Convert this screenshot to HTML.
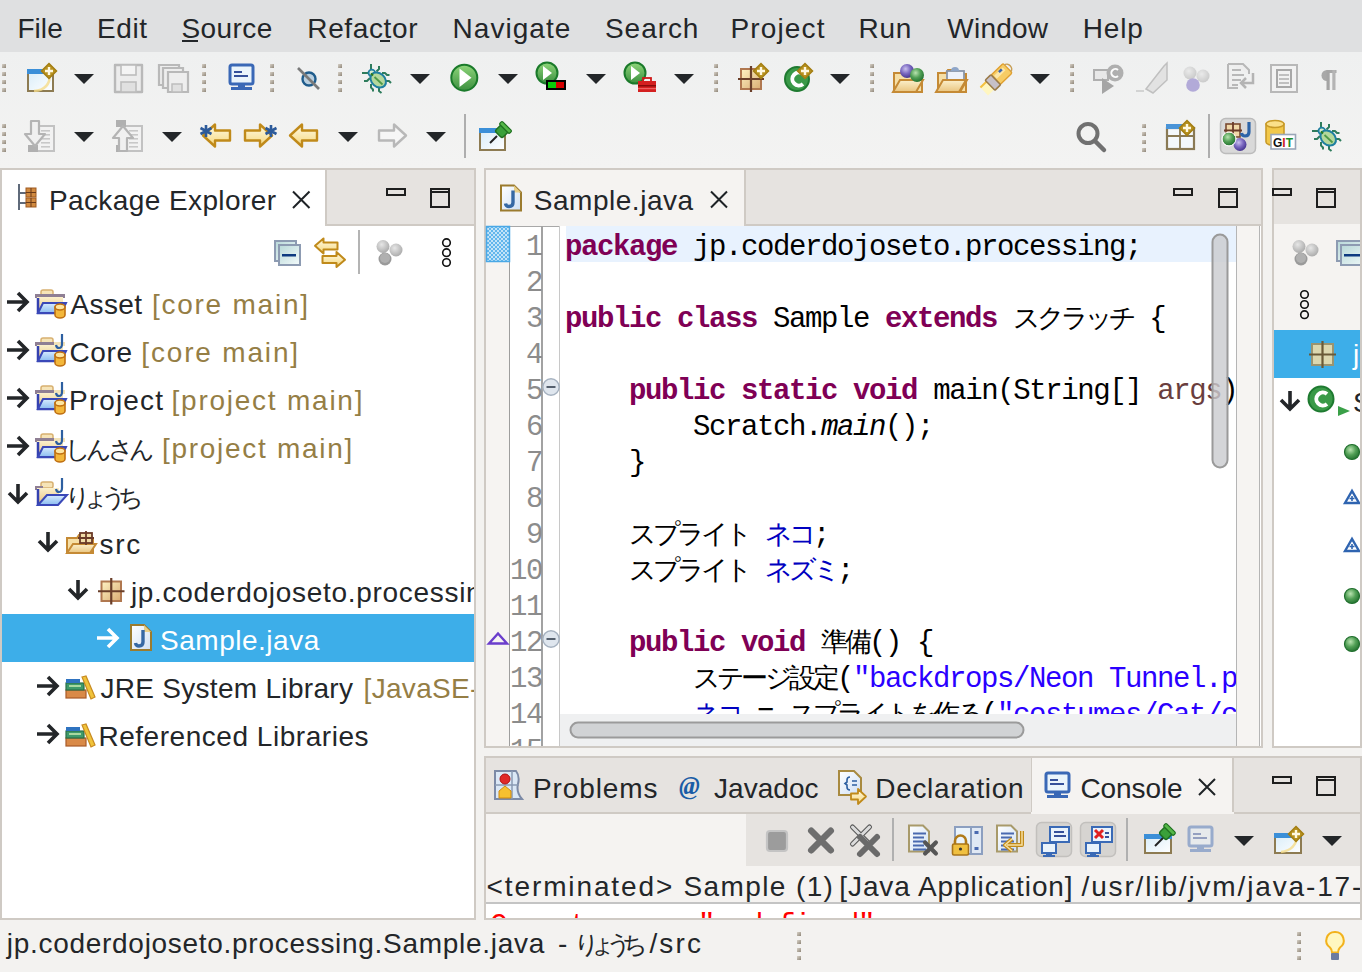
<!DOCTYPE html>
<html><head><meta charset="utf-8"><style>
html,body{margin:0;padding:0;}
body{width:1362px;height:972px;overflow:hidden;position:relative;background:#f3f2f0;font-family:"Liberation Sans",sans-serif;}
.b{position:absolute;}
.t{position:absolute;line-height:80px;height:80px;white-space:pre;font-family:"Liberation Sans",sans-serif;}
.i{position:absolute;}
.code{position:absolute;left:565px;top:230px;width:671px;height:484px;overflow:hidden;font-family:"Liberation Mono",monospace;font-size:29px;letter-spacing:-1.4px;line-height:36px;white-space:pre;color:#000;}
.lnum{position:absolute;left:486px;top:230px;width:56px;height:516px;overflow:hidden;font-family:"Liberation Mono",monospace;font-size:29px;letter-spacing:-1.4px;line-height:36px;white-space:pre;color:#8c8c8c;}
.lnum div{padding-right:0}
.k{color:#7f0055;font-weight:bold}
.j{font-size:26.5px;letter-spacing:0}
.c{display:inline-block;width:24px;overflow:visible}
.f{color:#0000c0}
.s{color:#2a00ff}
</style></head><body>
<div class="b" style="left:0px;top:0px;width:1362px;height:52px;background:#dfe0e1"></div><div class="b" style="left:0px;top:52px;width:1362px;height:116px;background:linear-gradient(#eff0f0,#f3f3f2)"></div><div class="b" style="left:0px;top:168px;width:476px;height:752px;background:#fff;border:2px solid #cfcac4;box-sizing:border-box"></div><div class="b" style="left:2px;top:170px;width:472px;height:54px;background:#e6e3e0"></div><div class="b" style="left:2px;top:170px;width:323px;height:56px;background:#fff"></div><div class="b" style="left:325px;top:170px;width:2px;height:54px;background:#cfcac4"></div><div class="b" style="left:325px;top:224px;width:149px;height:2px;background:#cfcac4"></div><div class="b" style="left:2px;top:614px;width:472px;height:48px;background:#3daee9"></div><div class="b" style="left:484px;top:168px;width:779px;height:580px;background:#fff;border:2px solid #cfcac4;box-sizing:border-box"></div><div class="b" style="left:486px;top:170px;width:775px;height:54px;background:#e6e3e0"></div><div class="b" style="left:486px;top:170px;width:258px;height:56px;background:#f5f3f1"></div><div class="b" style="left:744px;top:170px;width:2px;height:54px;background:#cfcac4"></div><div class="b" style="left:744px;top:224px;width:517px;height:2px;background:#cfcac4"></div><div class="b" style="left:486px;top:226px;width:23px;height:520px;background:#f6f4f2"></div><div class="b" style="left:509px;top:226px;width:1px;height:520px;background:#9e9e9e"></div><div class="b" style="left:510px;top:226px;width:50px;height:1px;background:#a8a8a8"></div><div class="b" style="left:541px;top:226px;width:2px;height:520px;background:#a2a2a2"></div><div class="b" style="left:559px;top:226px;width:1px;height:520px;background:#c8c8c8"></div><div class="b" style="left:566px;top:226px;width:670px;height:36px;background:#e8f2fe"></div><div class="b" style="left:1236px;top:226px;width:24px;height:520px;background:#f6f4f2;border-left:1px solid #b5b5b5;border-right:1px solid #b5b5b5;box-sizing:border-box"></div><div class="b" style="left:1272px;top:168px;width:90px;height:580px;background:#fff;border:2px solid #cfcac4;box-sizing:border-box"></div><div class="b" style="left:1274px;top:170px;width:86px;height:54px;background:#e6e3e0"></div><div class="b" style="left:1274px;top:224px;width:86px;height:106px;background:#f5f3f1"></div><div class="b" style="left:1274px;top:330px;width:86px;height:48px;background:#3daee9"></div><div class="b" style="left:484px;top:756px;width:878px;height:164px;background:#f5f3f1;border:2px solid #cfcac4;box-sizing:border-box"></div><div class="b" style="left:486px;top:758px;width:874px;height:54px;background:#e6e3e0"></div><div class="b" style="left:1031px;top:758px;width:201px;height:56px;background:#f5f3f1"></div><div class="b" style="left:1031px;top:758px;width:1px;height:54px;background:#cfcac4"></div><div class="b" style="left:1232px;top:758px;width:2px;height:54px;background:#cfcac4"></div><div class="b" style="left:486px;top:812px;width:545px;height:2px;background:#cfcac4"></div><div class="b" style="left:1234px;top:812px;width:126px;height:2px;background:#cfcac4"></div><div class="b" style="left:746px;top:814px;width:614px;height:52px;background:#e6e3e0"></div><div class="b" style="left:486px;top:902px;width:874px;height:2px;background:#c4c4c4"></div><div class="b" style="left:486px;top:904px;width:874px;height:14px;background:#fff"></div><div class="b" style="left:0px;top:920px;width:1362px;height:52px;background:#f3f2f0"></div>
<div class="code">
<div class="cl" style="position:absolute;left:0;top:0px;height:36px"><span class="k">package</span> jp.coderdojoseto.processing;</div>
<div class="cl" style="position:absolute;left:0;top:36px;height:36px"></div>
<div class="cl" style="position:absolute;left:0;top:72px;height:36px"><span class="k">public</span> <span class="k">class</span> Sample <span class="k">extends</span> <span class="j"><span class="c">ス</span><span class="c">ク</span><span class="c">ラ</span><span class="c">ッ</span><span class="c">チ</span></span> {</div>
<div class="cl" style="position:absolute;left:0;top:108px;height:36px"></div>
<div class="cl" style="position:absolute;left:0;top:144px;height:36px">    <span class="k">public</span> <span class="k">static</span> <span class="k">void</span> main(String[] <span style="color:#6a3e3e">args</span>) {</div>
<div class="cl" style="position:absolute;left:0;top:180px;height:36px">        Scratch.<i>main</i>();</div>
<div class="cl" style="position:absolute;left:0;top:216px;height:36px">    }</div>
<div class="cl" style="position:absolute;left:0;top:252px;height:36px"></div>
<div class="cl" style="position:absolute;left:0;top:288px;height:36px">    <span class="j"><span class="c">ス</span><span class="c">プ</span><span class="c">ラ</span><span class="c">イ</span><span class="c">ト</span></span> <span class="f j"><span class="c">ネ</span><span class="c">コ</span></span>;</div>
<div class="cl" style="position:absolute;left:0;top:324px;height:36px">    <span class="j"><span class="c">ス</span><span class="c">プ</span><span class="c">ラ</span><span class="c">イ</span><span class="c">ト</span></span> <span class="f j"><span class="c">ネ</span><span class="c">ズ</span><span class="c">ミ</span></span>;</div>
<div class="cl" style="position:absolute;left:0;top:360px;height:36px"></div>
<div class="cl" style="position:absolute;left:0;top:396px;height:36px">    <span class="k">public</span> <span class="k">void</span> <span class="j"><span class="c">準</span><span class="c">備</span></span>() {</div>
<div class="cl" style="position:absolute;left:0;top:432px;height:36px">        <span class="j"><span class="c">ス</span><span class="c">テ</span><span class="c">ー</span><span class="c">ジ</span><span class="c">設</span><span class="c">定</span></span>(<span class="s">"backdrops/Neon Tunnel.png"</span>);</div>
<div class="cl" style="position:absolute;left:0;top:468px;height:36px">        <span class="f j"><span class="c">ネ</span><span class="c">コ</span></span> = <span class="j"><span class="c">ス</span><span class="c">プ</span><span class="c">ラ</span><span class="c">イ</span><span class="c">ト</span><span class="c">を</span><span class="c">作</span><span class="c">る</span></span>(<span class="s">"costumes/Cat/cat-a.svg"</span>);</div>
<div class="cl" style="position:absolute;left:0;top:504px;height:36px">        <span class="f j"><span class="c">ネ</span><span class="c">ズ</span><span class="c">ミ</span></span> = <span class="j"><span class="c">ス</span><span class="c">プ</span><span class="c">ラ</span><span class="c">イ</span><span class="c">ト</span><span class="c">を</span><span class="c">作</span><span class="c">る</span></span>("costumes/Mouse/mouse.svg");</div>
</div>
<div class="lnum">
<div style="position:absolute;right:0;top:0px;height:36px">1</div>
<div style="position:absolute;right:0;top:36px;height:36px">2</div>
<div style="position:absolute;right:0;top:72px;height:36px">3</div>
<div style="position:absolute;right:0;top:108px;height:36px">4</div>
<div style="position:absolute;right:0;top:144px;height:36px">5</div>
<div style="position:absolute;right:0;top:180px;height:36px">6</div>
<div style="position:absolute;right:0;top:216px;height:36px">7</div>
<div style="position:absolute;right:0;top:252px;height:36px">8</div>
<div style="position:absolute;right:0;top:288px;height:36px">9</div>
<div style="position:absolute;right:0;top:324px;height:36px">10</div>
<div style="position:absolute;right:0;top:360px;height:36px">11</div>
<div style="position:absolute;right:0;top:396px;height:36px">12</div>
<div style="position:absolute;right:0;top:432px;height:36px">13</div>
<div style="position:absolute;right:0;top:468px;height:36px">14</div>
<div style="position:absolute;right:0;top:504px;height:36px">15</div>
</div>
<div class="t" style="left:17.4px;top:-11px;font-size:28px;letter-spacing:0.067px;color:#232629">File</div>
<div class="t" style="left:97.1px;top:-11px;font-size:28px;letter-spacing:0.567px;color:#232629">Edit</div>
<div class="t" style="left:181.4px;top:-11px;font-size:28px;letter-spacing:0.42px;color:#232629">Source</div>
<div class="t" style="left:307.3px;top:-11px;font-size:28px;letter-spacing:0.629px;color:#232629">Refactor</div>
<div class="t" style="left:452.5px;top:-11px;font-size:28px;letter-spacing:1.043px;color:#232629">Navigate</div>
<div class="t" style="left:605.0px;top:-11px;font-size:28px;letter-spacing:0.94px;color:#232629">Search</div>
<div class="t" style="left:730.5px;top:-11px;font-size:28px;letter-spacing:1.133px;color:#232629">Project</div>
<div class="t" style="left:858.5px;top:-11px;font-size:28px;letter-spacing:0.75px;color:#232629">Run</div>
<div class="t" style="left:947.3px;top:-11px;font-size:28px;letter-spacing:0.24px;color:#232629">Window</div>
<div class="t" style="left:1082.7px;top:-11px;font-size:28px;letter-spacing:0.833px;color:#232629">Help</div>
<div class="t" style="left:48.9px;top:161px;font-size:28px;letter-spacing:0.407px;color:#232629">Package Explorer</div>
<div class="t" style="left:533.7px;top:161px;font-size:28px;letter-spacing:0.54px;color:#232629">Sample.java</div>
<div class="t" style="left:533.0px;top:749px;font-size:28px;letter-spacing:0.886px;color:#232629">Problems</div>
<div class="t" style="left:714.0px;top:749px;font-size:28px;letter-spacing:0.033px;color:#232629">Javadoc</div>
<div class="t" style="left:875.3px;top:749px;font-size:28px;letter-spacing:0.66px;color:#232629">Declaration</div>
<div class="t" style="left:1080.5px;top:749px;font-size:28px;letter-spacing:-0.1px;color:#232629">Console</div>
<div class="t" style="left:486.6px;top:847px;font-size:28px;letter-spacing:1.882px;color:#232629">&lt;terminated&gt;</div>
<div class="t" style="left:683.4px;top:847px;font-size:28px;letter-spacing:1.4px;color:#232629">Sample (1)</div>
<div class="t" style="left:839.3px;top:847px;font-size:28px;letter-spacing:0.906px;color:#232629">[Java Application]</div>
<div class="t" style="left:1081.5px;top:847px;font-size:28px;letter-spacing:1.855px;color:#232629">/usr/lib/jvm/java-17-</div>
<div class="t" style="left:6.8px;top:904px;font-size:28px;letter-spacing:0.708px;color:#232629">jp.coderdojoseto.processing.Sample.java</div>
<div class="t" style="left:558.0px;top:904px;font-size:28px;letter-spacing:0.5px;color:#232629">-</div>
<div class="t" style="left:573.6px;top:904px;font-size:25px;letter-spacing:-9.967px;color:#232629">りょうち</div>
<div class="t" style="left:649.4px;top:904px;font-size:28px;letter-spacing:2.2px;color:#232629">/src</div>
<div style="position:absolute;left:2px;top:226px;width:472px;height:692px;overflow:hidden"><div style="position:absolute;left:-2px;top:-226px"><div class="t" style="left:70.5px;top:265px;font-size:28px;letter-spacing:0.375px;color:#232629">Asset</div>
<div class="t" style="left:151.9px;top:265px;font-size:28px;letter-spacing:1.76px;color:#957e45">[core main]</div>
<div class="t" style="left:69.5px;top:313px;font-size:28px;letter-spacing:0.633px;color:#232629">Core</div>
<div class="t" style="left:141.3px;top:313px;font-size:28px;letter-spacing:1.83px;color:#957e45">[core main]</div>
<div class="t" style="left:69.1px;top:361px;font-size:28px;letter-spacing:1.117px;color:#232629">Project</div>
<div class="t" style="left:171.5px;top:361px;font-size:28px;letter-spacing:1.762px;color:#957e45">[project main]</div>
<div class="t" style="left:65.3px;top:409px;font-size:25px;letter-spacing:-4.867px;color:#232629">しんさん</div>
<div class="t" style="left:162.0px;top:409px;font-size:28px;letter-spacing:1.715px;color:#957e45">[project main]</div>
<div class="t" style="left:64.8px;top:457px;font-size:25px;letter-spacing:-8.1px;color:#232629">りょうち</div>
<div class="t" style="left:99.4px;top:505px;font-size:28px;letter-spacing:1.8px;color:#232629">src</div>
<div class="t" style="left:130.9px;top:553px;font-size:28px;letter-spacing:0.708px;color:#232629">jp.coderdojoseto.processing</div>
<div class="t" style="left:160.0px;top:601px;font-size:28px;letter-spacing:0.52px;color:#ffffff">Sample.java</div>
<div class="t" style="left:100.4px;top:649px;font-size:28px;letter-spacing:0.3px;color:#232629">JRE System Library</div>
<div class="t" style="left:363.6px;top:649px;font-size:28px;letter-spacing:0.3px;color:#957e45">[JavaSE-17]</div>
<div class="t" style="left:98.4px;top:697px;font-size:28px;letter-spacing:0.537px;color:#232629">Referenced Libraries</div></div></div>
<svg class="i" style="left:0;top:0" width="1362" height="972" viewBox="0 0 1362 972"><defs>
<linearGradient id="gGrip" x1="0" y1="0" x2="1" y2="1"><stop offset="0" stop-color="#d8d2c8"/><stop offset="1" stop-color="#8f8678"/></linearGradient>
<linearGradient id="gGreen" x1="0" y1="0" x2="0" y2="1"><stop offset="0" stop-color="#8fd67a"/><stop offset="1" stop-color="#3b8f3f"/></linearGradient>
<radialGradient id="gSphG" cx="0.4" cy="0.35" r="0.7"><stop offset="0" stop-color="#b9e3b0"/><stop offset="0.5" stop-color="#52a056"/><stop offset="1" stop-color="#1f6e2c"/></radialGradient>
<radialGradient id="gSphP" cx="0.4" cy="0.35" r="0.7"><stop offset="0" stop-color="#c9c0ee"/><stop offset="0.5" stop-color="#7a68c0"/><stop offset="1" stop-color="#3f2f8a"/></radialGradient>
<radialGradient id="gSphGrey" cx="0.4" cy="0.35" r="0.7"><stop offset="0" stop-color="#e6e6e6"/><stop offset="1" stop-color="#a8a8a8"/></radialGradient>
<linearGradient id="gTan" x1="0" y1="0" x2="0" y2="1"><stop offset="0" stop-color="#fbf0cc"/><stop offset="1" stop-color="#e9c47e"/></linearGradient>
<linearGradient id="gPkg" x1="0" y1="0" x2="1" y2="1"><stop offset="0" stop-color="#fff3c4"/><stop offset="1" stop-color="#d9ac72"/></linearGradient>
<linearGradient id="gBlueF" x1="0" y1="0" x2="0" y2="1"><stop offset="0" stop-color="#d8ecff"/><stop offset="1" stop-color="#8bbcf0"/></linearGradient>
<linearGradient id="gWin" x1="0" y1="0" x2="1" y2="1"><stop offset="0" stop-color="#d8ecf8"/><stop offset="1" stop-color="#ffffff"/></linearGradient>
<linearGradient id="gDoc" x1="0" y1="0" x2="1" y2="1"><stop offset="0" stop-color="#ffffff"/><stop offset="1" stop-color="#cfe0f4"/></linearGradient>
<linearGradient id="gArrow" x1="0" y1="0" x2="0" y2="1"><stop offset="0" stop-color="#fffbe8"/><stop offset="1" stop-color="#f6d77a"/></linearGradient>
<linearGradient id="gCol" x1="0" y1="0" x2="1" y2="1"><stop offset="0" stop-color="#b8d8d8"/><stop offset="1" stop-color="#f4fbfb"/></linearGradient>
<pattern id="pDot" x="487" y="226" width="4" height="4" patternUnits="userSpaceOnUse"><rect width="4" height="4" fill="#c4e4f8"/><rect width="2" height="2" fill="#62b6ec"/><rect x="2" y="2" width="2" height="2" fill="#62b6ec"/></pattern>
<clipPath id="cpCon"><rect x="486" y="904" width="876" height="14"/></clipPath></defs><rect x="182" y="40" width="16" height="2" fill="#232629"/><rect x="380" y="40" width="10" height="2" fill="#232629"/><rect x="2" y="64" width="4" height="4" fill="url(#gGrip)"/><rect x="2" y="72" width="4" height="4" fill="url(#gGrip)"/><rect x="2" y="80" width="4" height="4" fill="url(#gGrip)"/><rect x="2" y="88" width="4" height="4" fill="url(#gGrip)"/><rect x="202" y="64" width="4" height="4" fill="url(#gGrip)"/><rect x="202" y="72" width="4" height="4" fill="url(#gGrip)"/><rect x="202" y="80" width="4" height="4" fill="url(#gGrip)"/><rect x="202" y="88" width="4" height="4" fill="url(#gGrip)"/><rect x="270" y="64" width="4" height="4" fill="url(#gGrip)"/><rect x="270" y="72" width="4" height="4" fill="url(#gGrip)"/><rect x="270" y="80" width="4" height="4" fill="url(#gGrip)"/><rect x="270" y="88" width="4" height="4" fill="url(#gGrip)"/><rect x="338" y="64" width="4" height="4" fill="url(#gGrip)"/><rect x="338" y="72" width="4" height="4" fill="url(#gGrip)"/><rect x="338" y="80" width="4" height="4" fill="url(#gGrip)"/><rect x="338" y="88" width="4" height="4" fill="url(#gGrip)"/><rect x="714" y="64" width="4" height="4" fill="url(#gGrip)"/><rect x="714" y="72" width="4" height="4" fill="url(#gGrip)"/><rect x="714" y="80" width="4" height="4" fill="url(#gGrip)"/><rect x="714" y="88" width="4" height="4" fill="url(#gGrip)"/><rect x="870" y="64" width="4" height="4" fill="url(#gGrip)"/><rect x="870" y="72" width="4" height="4" fill="url(#gGrip)"/><rect x="870" y="80" width="4" height="4" fill="url(#gGrip)"/><rect x="870" y="88" width="4" height="4" fill="url(#gGrip)"/><rect x="1070" y="64" width="4" height="4" fill="url(#gGrip)"/><rect x="1070" y="72" width="4" height="4" fill="url(#gGrip)"/><rect x="1070" y="80" width="4" height="4" fill="url(#gGrip)"/><rect x="1070" y="88" width="4" height="4" fill="url(#gGrip)"/><rect x="28" y="70" width="25" height="21" fill="url(#gWin)" stroke="#8d7b52" stroke-width="2"/><rect x="27" y="69" width="27" height="5" fill="#3b8fd8"/><path d="M34 91Q50 90 50 74" fill="none" stroke="#f5dc8a" stroke-width="2.5" opacity="0.8"/><path d="M49 63.5L56.5 71L49 78.5L41.5 71z" fill="#b8921f" stroke="#a47e12" stroke-width="1.5"/><path d="M45 71h8M49 67v8" stroke="#b08a1e" stroke-width="0" /><path d="M45 71h8M49 67v8" stroke="#fff8e0" stroke-width="2.4"/><path d="M74 74h20l-10.0 10z" fill="#232629"/><path d="M115 65h27v27h-27z" fill="#ececec" stroke="#b9b9b9" stroke-width="2.4" stroke-linejoin="round"/><rect x="121" y="65" width="15" height="10" fill="#f4f4f4" stroke="#bdbdbd" stroke-width="1.6"/><rect x="121" y="82" width="15" height="10" fill="#e0e0e0" stroke="#bdbdbd" stroke-width="1.6"/><path d="M159 65h20v20h-20z" fill="#eeeeee" stroke="#b9b9b9" stroke-width="2.2"/><path d="M163 68h20v20h-20z" fill="#eeeeee" stroke="#b9b9b9" stroke-width="2.2"/><path d="M168 72h20v20h-20z" fill="#eeeeee" stroke="#b9b9b9" stroke-width="2.2"/><rect x="172" y="84" width="10" height="8" fill="#e0e0e0" stroke="#bdbdbd" stroke-width="1.5"/><g opacity="1.0"><rect x="230" y="65" width="23" height="19" rx="2" fill="#eaf4fb" stroke="#3a68b6" stroke-width="3"/><rect x="234" y="71" width="8" height="2" fill="#35509a"/><rect x="234" y="75" width="14" height="2" fill="#35509a"/><rect x="238" y="84" width="7" height="3" fill="#3a68b6"/><rect x="231" y="87" width="21" height="3" fill="#3a68b6"/></g><circle cx="309" cy="79" r="6.5" fill="#b9cfdf" stroke="#1f5c8c" stroke-width="2.4"/><path d="M298 68L319 89" stroke="#7a7a7a" stroke-width="2.6"/><g transform="translate(0 0)"><g stroke="#2e7c5c" stroke-width="2" fill="none" stroke-linejoin="round"><path d="M371 64V70M379 66V69L376.5 71.5M362 73H368.5M364 81H367L370 78M371 84V87.5L373 89.5V91.5M379 88V91L381.5 93M382 73H385L387 75H389.5M386 81H389L391 83"/></g><circle cx="371.8" cy="73" r="3.3" fill="#d8ecd0" stroke="#1f7fa0" stroke-width="1.8"/><ellipse cx="378.2" cy="80" rx="8.6" ry="6.6" transform="rotate(42 378.2 80)" fill="#b4d89c" stroke="#1f7fa0" stroke-width="2"/><path d="M374.5 77L382.5 84.5" stroke="#4f9a48" stroke-width="1.8"/><path d="M371 73.5l2 2" stroke="#2a7a20" stroke-width="2"/></g><path d="M410 74h20l-10.0 10z" fill="#232629"/><circle cx="464.3" cy="77.7" r="13" fill="url(#gGreen)" stroke="#1a7a2a" stroke-width="2"/><path d="M459.5 68.5L471.5 77.7L459.5 87z" fill="#ffffff"/><path d="M498 74h20l-10.0 10z" fill="#232629"/><circle cx="547" cy="73" r="10.5" fill="url(#gGreen)" stroke="#1a7a2a" stroke-width="2"/><path d="M543 66L552 73L543 80z" fill="#ffffff"/><rect x="546" y="80" width="20" height="10" fill="#000"/><rect x="548" y="82" width="8" height="6" fill="#0acc0a"/><rect x="556" y="82" width="8" height="6" fill="#d40000"/><path d="M586 74h20l-10.0 10z" fill="#232629"/><circle cx="635" cy="73" r="10.5" fill="url(#gGreen)" stroke="#1a7a2a" stroke-width="2"/><path d="M631 66L640 73L631 80z" fill="#ffffff"/><rect x="643" y="78" width="8" height="4" fill="none" stroke="#d01818" stroke-width="1.8"/><rect x="638" y="81" width="18" height="11" fill="#d42020"/><rect x="638" y="85" width="18" height="1.5" fill="#8a0a0a"/><rect x="638" y="88" width="18" height="1.2" fill="#f06060"/><path d="M674 74h20l-10.0 10z" fill="#232629"/><rect x="741" y="69" width="20" height="20" fill="url(#gPkg)" stroke="#b07850" stroke-width="2"/><path d="M751.0 66V92M738 79.0H764" stroke="#6a3f2a" stroke-width="2.2"/><path d="M761 63.5L768.5 71L761 78.5L753.5 71z" fill="#b8921f" stroke="#a47e12" stroke-width="1.5"/><path d="M757 71h8M761 67v8" stroke="#b08a1e" stroke-width="0" /><path d="M757 71h8M761 67v8" stroke="#fff8e0" stroke-width="2.4"/><circle cx="797" cy="79" r="12" fill="#3a9a48" stroke="#1e7a30" stroke-width="2"/><path d="M803 74A6.5 6.5 0 1 0 803 84" fill="none" stroke="#ffffff" stroke-width="4"/><path d="M805 63.5L812.5 71L805 78.5L797.5 71z" fill="#b8921f" stroke="#a47e12" stroke-width="1.5"/><path d="M801 71h8M805 67v8" stroke="#b08a1e" stroke-width="0" /><path d="M801 71h8M805 67v8" stroke="#fff8e0" stroke-width="2.4"/><path d="M830 74h20l-10.0 10z" fill="#232629"/><path d="M894 73h8l2 -3h8v4h10v18h-28z" fill="#f6dfa6" stroke="#c58a35" stroke-width="2"/><path d="M893 92L900 80H923L916 92z" fill="url(#gTan)" stroke="#c58a35" stroke-width="2"/><circle cx="907" cy="71" r="7" fill="url(#gSphP)"/><circle cx="917" cy="75" r="7" fill="url(#gSphG)"/><path d="M938 73h8l2 -3h8v4h10v18h-28z" fill="#f6dfa6" stroke="#c58a35" stroke-width="2"/><path d="M937 92L944 80H967L960 92z" fill="url(#gTan)" stroke="#c58a35" stroke-width="2"/><rect x="947" y="71" width="17" height="11" fill="#eef2fa" stroke="#8a96a8" stroke-width="1.8"/><path d="M951 71a4 4 0 0 1 8 0" fill="#8fa6c8"/><path d="M936 92L943 80H966L959 92z" fill="url(#gTan)" stroke="#c58a35" stroke-width="2"/><g transform="rotate(-44 996.5 79)"><path d="M979 73H988V85H979z" fill="#fff6c0"/><path d="M979 73H988V75H979z" fill="#f4c040"/><rect x="995" y="72.5" width="17" height="13" rx="1.5" fill="#f6cc66" stroke="#e0a030" stroke-width="1.4"/><rect x="997" y="75" width="12" height="4" fill="#fce6a8"/><rect x="987.5" y="72" width="8" height="14" rx="1" fill="#c6c0c8" stroke="#9a7a48" stroke-width="1.6"/><path d="M1012 74.5a3.5 4.5 0 0 1 0 9" fill="none" stroke="#c8a058" stroke-width="1.6"/><rect x="1003" y="74.5" width="4" height="2.5" fill="#3a64b0"/></g><path d="M1030 74h20l-10.0 10z" fill="#232629"/><g opacity="0.75"><rect x="1094" y="70" width="14" height="10" fill="#e6e6e6" stroke="#9a9a9a" stroke-width="2"/><circle cx="1115" cy="73" r="8.5" fill="#9a9a9a"/><path d="M1118 70A4 4 0 1 0 1118 76" fill="none" stroke="#fff" stroke-width="2"/><path d="M1102 78L1114 86L1102 94z" fill="#8c8c8c"/></g><path d="M1136 91h8" stroke="#c8c8c8" stroke-width="1.5"/><path d="M1146 89L1164 66L1167 63V80L1153 93z" fill="#e2e2e2" stroke="#c0c0c0" stroke-width="1.5"/><g opacity="0.55"><circle cx="1190" cy="73" r="6.5" fill="url(#gSphGrey)"/><circle cx="1203" cy="76" r="6.5" fill="url(#gSphGrey)"/></g><circle cx="1193" cy="85" r="6.8" fill="#b2aad8"/><path d="M1228 64h15l6 6v4M1228 64v24h10" fill="#eeeeee" stroke="#b8b8b8" stroke-width="2"/><path d="M1232 70h9M1232 75h12M1232 80h9M1232 85h6" stroke="#b8b8b8" stroke-width="1.8"/><path d="M1253 73v10h-11M1246 78l-5 5l5 5" fill="none" stroke="#b4b4b4" stroke-width="2.5"/><rect x="1271" y="65" width="26" height="27" fill="#f2f2f2" stroke="#b8b8b8" stroke-width="2"/><rect x="1277" y="70" width="14" height="17" fill="none" stroke="#a8a8a8" stroke-width="2"/><path d="M1279 75h10M1279 79h10M1279 83h10" stroke="#b0b0b0" stroke-width="1.6"/><path d="M1327 70H1336.5V73H1327z" fill="#a8a8a8"/><path d="M1327 70A5.5 5.5 0 0 0 1327 81z" fill="#a8a8a8"/><rect x="1326.5" y="70" width="3.2" height="20" fill="#a4a4a4"/><rect x="1332.3" y="70" width="3.2" height="20" fill="#b4b4b4"/><rect x="2" y="124" width="4" height="4" fill="url(#gGrip)"/><rect x="2" y="132" width="4" height="4" fill="url(#gGrip)"/><rect x="2" y="140" width="4" height="4" fill="url(#gGrip)"/><rect x="2" y="148" width="4" height="4" fill="url(#gGrip)"/><rect x="1142" y="124" width="4" height="4" fill="url(#gGrip)"/><rect x="1142" y="132" width="4" height="4" fill="url(#gGrip)"/><rect x="1142" y="140" width="4" height="4" fill="url(#gGrip)"/><rect x="1142" y="148" width="4" height="4" fill="url(#gGrip)"/><rect x="36" y="126" width="18" height="25" fill="#f2f2f2" stroke="#c2c2c2" stroke-width="2"/><rect x="41" y="130" width="9" height="1.6" fill="#c8c8c8"/><rect x="41" y="134" width="9" height="1.6" fill="#c8c8c8"/><rect x="41" y="138" width="9" height="1.6" fill="#c8c8c8"/><rect x="41" y="142" width="9" height="1.6" fill="#c8c8c8"/><rect x="41" y="146" width="9" height="1.6" fill="#c8c8c8"/><rect x="28" y="145" width="10" height="7" fill="#b0b0b0"/><path d="M31 121h8v13h6l-10 12l-10 -12h6z" fill="#f0f0f0" stroke="#b4b4b4" stroke-width="2.2" stroke-linejoin="round"/><path d="M74 132h20l-10.0 10z" fill="#232629"/><rect x="124" y="126" width="18" height="25" fill="#f2f2f2" stroke="#c2c2c2" stroke-width="2"/><rect x="129" y="130" width="9" height="1.6" fill="#c8c8c8"/><rect x="129" y="134" width="9" height="1.6" fill="#c8c8c8"/><rect x="129" y="138" width="9" height="1.6" fill="#c8c8c8"/><rect x="129" y="142" width="9" height="1.6" fill="#c8c8c8"/><rect x="129" y="146" width="9" height="1.6" fill="#c8c8c8"/><rect x="116" y="145" width="10" height="7" fill="#b0b0b0"/><rect x="116" y="120" width="10" height="7" fill="#b0b0b0"/><path d="M119 151h8v-13h6l-10 -12l-10 12h6z" fill="#f0f0f0" stroke="#b4b4b4" stroke-width="2.2" stroke-linejoin="round"/><path d="M162 132h20l-10.0 10z" fill="#232629"/><path d="M203 135.5L215 124.5V130.5H230V140.5H215V146.5z" fill="url(#gArrow)" stroke="#c08a1a" stroke-width="2.4" stroke-linejoin="round"/><path d="M206 125V137M200.5 128L211.5 134M200.5 134L211.5 128" stroke="#2c5a9a" stroke-width="2.6"/><path d="M272 135.5L260 124.5V130.5H245V140.5H260V146.5z" fill="url(#gArrow)" stroke="#c08a1a" stroke-width="2.4" stroke-linejoin="round"/><path d="M271 125V137M265.5 128L276.5 134M265.5 134L276.5 128" stroke="#2c5a9a" stroke-width="2.6"/><path d="M290 135.5L302 124.5V130.5H317V140.5H302V146.5z" fill="url(#gArrow)" stroke="#c08a1a" stroke-width="2.4" stroke-linejoin="round"/><path d="M338 132h20l-10.0 10z" fill="#232629"/><path d="M406 135.5L394 124.5V130.5H379V140.5H394V146.5z" fill="#f6f6f6" stroke="#b8b8b8" stroke-width="2.4" stroke-linejoin="round"/><path d="M426 132h20l-10.0 10z" fill="#232629"/><rect x="464" y="114" width="2" height="44" fill="#aeaeae"/><rect x="480" y="129" width="25" height="21" fill="url(#gWin)" stroke="#8d7b52" stroke-width="2"/><rect x="479" y="128" width="27" height="5" fill="#3b8fd8"/><path d="M490 143L497 136" stroke="#222" stroke-width="2"/><g transform="rotate(45 502 131)"><rect x="497" y="126" width="10" height="10" rx="2" fill="#3aa03a" stroke="#1f7020" stroke-width="1.5"/><rect x="495" y="124" width="14" height="4" rx="1.5" fill="#55b848" stroke="#1f7020" stroke-width="1.2"/></g><circle cx="1088" cy="133.5" r="9.5" fill="none" stroke="#707070" stroke-width="4"/><path d="M1095 141L1104 150" stroke="#707070" stroke-width="4.5" stroke-linecap="round"/><rect x="1167" y="128" width="27" height="21" fill="#f4f8fc" stroke="#8a7a55" stroke-width="2.2"/><rect x="1166" y="124" width="17" height="5" fill="#4a94d8"/><path d="M1167 136H1194M1180 129V149" stroke="#8a7a55" stroke-width="1.8"/><path d="M1187 120.5L1194.5 128L1187 135.5L1179.5 128z" fill="#b8921f" stroke="#a47e12" stroke-width="1.5"/><path d="M1183 128h8M1187 124v8" stroke="#b08a1e" stroke-width="0" /><path d="M1183 128h8M1187 124v8" stroke="#fff8e0" stroke-width="2.4"/><rect x="1208" y="114" width="2" height="44" fill="#aeaeae"/><rect x="1220.5" y="118.5" width="35" height="35" rx="5" fill="#d9d9d9" stroke="#bcbcbc" stroke-width="1.5"/><rect x="1226" y="124" width="14" height="13" fill="#f0d8a8" stroke="#7a4a30" stroke-width="1.6"/><path d="M1233 122V139M1224 130.5H1242" stroke="#6a3a28" stroke-width="1.8"/><path d="M1249 122V132Q1249 136 1245 136Q1242 136 1241.5 133" fill="none" stroke="#2d64a8" stroke-width="3.2"/><circle cx="1240" cy="144.5" r="6.5" fill="url(#gSphP)"/><circle cx="1229" cy="139" r="6.5" fill="url(#gSphG)"/><circle cx="1229" cy="139" r="7" fill="none" stroke="#fff" stroke-width="1"/><path d="M1266 124V142A9 3.5 0 0 0 1284 142V124z" fill="#f2c84a" stroke="#c89a28" stroke-width="1.6"/><ellipse cx="1275" cy="124" rx="9" ry="3.5" fill="#fbe08a" stroke="#c89a28" stroke-width="1.6"/><rect x="1271" y="134.5" width="24.5" height="14.5" fill="#ffffff" stroke="#9aa6b8" stroke-width="1.6"/><text x="1273" y="147" font-family="Liberation Sans" font-weight="bold" font-size="12" fill="#111">G<tspan fill="#d02020">I</tspan><tspan fill="#1a8a2a">T</tspan></text><g transform="translate(950 58)"><g stroke="#2e7c5c" stroke-width="2" fill="none" stroke-linejoin="round"><path d="M371 64V70M379 66V69L376.5 71.5M362 73H368.5M364 81H367L370 78M371 84V87.5L373 89.5V91.5M379 88V91L381.5 93M382 73H385L387 75H389.5M386 81H389L391 83"/></g><circle cx="371.8" cy="73" r="3.3" fill="#d8ecd0" stroke="#1f7fa0" stroke-width="1.8"/><ellipse cx="378.2" cy="80" rx="8.6" ry="6.6" transform="rotate(42 378.2 80)" fill="#b4d89c" stroke="#1f7fa0" stroke-width="2"/><path d="M374.5 77L382.5 84.5" stroke="#4f9a48" stroke-width="1.8"/><path d="M371 73.5l2 2" stroke="#2a7a20" stroke-width="2"/></g><path d="M19 184V210M19 193H27M19 203H27" fill="none" stroke="#5f6a7a" stroke-width="2"/><rect x="26" y="188" width="10" height="9" fill="#d08a40" stroke="#a05a20" stroke-width="1"/><path d="M31 188v9M26 192.5h10" stroke="#6a3a18" stroke-width="1"/><rect x="26" y="198" width="10" height="9" fill="#d08a40" stroke="#a05a20" stroke-width="1"/><path d="M31 198v9M26 202.5h10" stroke="#6a3a18" stroke-width="1"/><path d="M293 191.5L309.5 208.0M309.5 191.5L293 208.0" stroke="#1e2226" stroke-width="2"/><rect x="387" y="189" width="18" height="6" fill="none" stroke="#1e1e1e" stroke-width="2"/><rect x="431" y="189" width="18" height="18" fill="none" stroke="#1e1e1e" stroke-width="2"/><rect x="430" y="191" width="20" height="2" fill="#1e1e1e"/><rect x="275" y="241" width="21" height="20" fill="url(#gCol)" stroke="#8d9bb2" stroke-width="2"/><rect x="279" y="245" width="21" height="20" fill="url(#gCol)" stroke="#8d9bb2" stroke-width="2"/><rect x="282" y="254" width="14" height="2.5" fill="#0e3a80"/><path d="M315 245.8L323.5 238.5V242.5H337.5V249.5H323.5V253.5z" fill="url(#gArrow)" stroke="#c08a1a" stroke-width="2" stroke-linejoin="round"/><path d="M345 259.8L336.5 252V256H322.5V263H336.5V267z" fill="url(#gArrow)" stroke="#c08a1a" stroke-width="2" stroke-linejoin="round"/><rect x="358" y="230" width="2" height="44" fill="#b4b4b4"/><circle cx="383" cy="246.5" r="6.5" fill="url(#gSphGrey)"/><circle cx="396" cy="250" r="6.5" fill="url(#gSphGrey)"/><circle cx="385" cy="259" r="6.5" fill="#9a9a9a"/><circle cx="385" cy="258" r="5" fill="#b0b0b0"/><circle cx="446.5" cy="242.7" r="3.8" fill="none" stroke="#111" stroke-width="1.6"/><circle cx="446.5" cy="252.7" r="3.8" fill="none" stroke="#111" stroke-width="1.6"/><circle cx="446.5" cy="262.5" r="3.8" fill="none" stroke="#111" stroke-width="1.6"/><path d="M7 302H27M18 293L27 302L18 311" fill="none" stroke="#232629" stroke-width="3.6" stroke-linejoin="miter"/><rect x="41" y="290" width="12" height="6" rx="2" fill="#f6e4b8" stroke="#d8b070" stroke-width="1.5"/><rect x="35" y="294" width="30" height="4" fill="#8f7f94"/><rect x="37" y="297" width="26" height="16" fill="url(#gTan)"/><path d="M38 298V313H57" fill="none" stroke="#3441b0" stroke-width="2.5"/><path d="M38 313L43 303H66L61 313z" fill="url(#gBlueF)" stroke="#3a48b8" stroke-width="2"/><path d="M55 307V315A5 3 0 0 0 65 315V307z" fill="#f3b73a" stroke="#c07012" stroke-width="1.6"/><ellipse cx="60" cy="307" rx="5" ry="3" fill="#fde5a0" stroke="#c07012" stroke-width="1.6"/><path d="M7 350H27M18 341L27 350L18 359" fill="none" stroke="#232629" stroke-width="3.6" stroke-linejoin="miter"/><rect x="41" y="338" width="12" height="6" rx="2" fill="#f6e4b8" stroke="#d8b070" stroke-width="1.5"/><rect x="54" y="342" width="11" height="4" fill="#f3e3b8"/><rect x="35" y="342" width="19" height="4" fill="#8f7f94"/><rect x="37" y="345" width="26" height="16" fill="url(#gTan)"/><path d="M38 346V361H57" fill="none" stroke="#3441b0" stroke-width="2.5"/><path d="M38 361L43 351H66L61 361z" fill="url(#gBlueF)" stroke="#3a48b8" stroke-width="2"/><path d="M62 334V344Q62 348 59 348Q56.5 348 56 345" fill="none" stroke="#2d5fa0" stroke-width="2.2"/><path d="M55 355V363A5 3 0 0 0 65 363V355z" fill="#f3b73a" stroke="#c07012" stroke-width="1.6"/><ellipse cx="60" cy="355" rx="5" ry="3" fill="#fde5a0" stroke="#c07012" stroke-width="1.6"/><path d="M7 398H27M18 389L27 398L18 407" fill="none" stroke="#232629" stroke-width="3.6" stroke-linejoin="miter"/><rect x="41" y="386" width="12" height="6" rx="2" fill="#f6e4b8" stroke="#d8b070" stroke-width="1.5"/><rect x="54" y="390" width="11" height="4" fill="#f3e3b8"/><rect x="35" y="390" width="19" height="4" fill="#8f7f94"/><rect x="37" y="393" width="26" height="16" fill="url(#gTan)"/><path d="M38 394V409H57" fill="none" stroke="#3441b0" stroke-width="2.5"/><path d="M38 409L43 399H66L61 409z" fill="url(#gBlueF)" stroke="#3a48b8" stroke-width="2"/><path d="M62 382V392Q62 396 59 396Q56.5 396 56 393" fill="none" stroke="#2d5fa0" stroke-width="2.2"/><path d="M55 403V411A5 3 0 0 0 65 411V403z" fill="#f3b73a" stroke="#c07012" stroke-width="1.6"/><ellipse cx="60" cy="403" rx="5" ry="3" fill="#fde5a0" stroke="#c07012" stroke-width="1.6"/><path d="M7 446H27M18 437L27 446L18 455" fill="none" stroke="#232629" stroke-width="3.6" stroke-linejoin="miter"/><rect x="41" y="434" width="12" height="6" rx="2" fill="#f6e4b8" stroke="#d8b070" stroke-width="1.5"/><rect x="54" y="438" width="11" height="4" fill="#f3e3b8"/><rect x="35" y="438" width="19" height="4" fill="#8f7f94"/><rect x="37" y="441" width="26" height="16" fill="url(#gTan)"/><path d="M38 442V457H57" fill="none" stroke="#3441b0" stroke-width="2.5"/><path d="M38 457L43 447H66L61 457z" fill="url(#gBlueF)" stroke="#3a48b8" stroke-width="2"/><path d="M62 430V440Q62 444 59 444Q56.5 444 56 441" fill="none" stroke="#2d5fa0" stroke-width="2.2"/><path d="M55 451V459A5 3 0 0 0 65 459V451z" fill="#f3b73a" stroke="#c07012" stroke-width="1.6"/><ellipse cx="60" cy="451" rx="5" ry="3" fill="#fde5a0" stroke="#c07012" stroke-width="1.6"/><path d="M18 484V502M9 493L18 502L27 493" fill="none" stroke="#232629" stroke-width="3.6"/><rect x="41" y="482" width="12" height="6" rx="2" fill="#f6e4b8" stroke="#d8b070" stroke-width="1.5"/><rect x="35" y="486" width="8" height="4" fill="#8f7f94"/><rect x="37" y="488" width="22" height="16" fill="url(#gTan)"/><path d="M38 489V505" fill="none" stroke="#3441b0" stroke-width="2.5"/><path d="M38 505L47 495H67L58 505z" fill="url(#gBlueF)" stroke="#3a48b8" stroke-width="2"/><path d="M62 478V488Q62 492 59 492Q56.5 492 56 489" fill="none" stroke="#2d5fa0" stroke-width="2.2"/><path d="M48 532V550M39 541L48 550L57 541" fill="none" stroke="#232629" stroke-width="3.6"/><path d="M67 538h10l2 -3h6v4h8v14h-26z" fill="#f6dfa6" stroke="#c58a35" stroke-width="2"/><path d="M67 553L73 544H96L90 553z" fill="url(#gTan)" stroke="#c58a35" stroke-width="2"/><rect x="80" y="533" width="12" height="10" fill="#f0dca8" stroke="#6a3a28" stroke-width="1.8"/><path d="M86 531V545M78 538H94" stroke="#6a3a28" stroke-width="1.8"/><path d="M78 580V598M69 589L78 598L87 589" fill="none" stroke="#232629" stroke-width="3.6"/><rect x="101.5" y="581.5" width="19.5" height="19.5" fill="url(#gPkg)" stroke="#b07850" stroke-width="2"/><path d="M111.25 578.0V604.5M98.0 591.25H124.5" stroke="#6a3f2a" stroke-width="2.2"/><path d="M97 638H117M108 629L117 638L108 647" fill="none" stroke="#ffffff" stroke-width="3.6" stroke-linejoin="miter"/><path d="M131 625H144L151 632V650H131z" fill="url(#gDoc)" stroke="#9b7b2e" stroke-width="2"/><path d="M144 625V632H151z" fill="#e8cf8a"/><path d="M143 630V642Q143 646 139 646Q136 646 135.5 643" fill="none" stroke="#3568a4" stroke-width="3.4"/><path d="M37 686H57M48 677L57 686L48 695" fill="none" stroke="#232629" stroke-width="3.6" stroke-linejoin="miter"/><rect x="66" y="690" width="20" height="8" fill="#d98a48" stroke="#a85a28" stroke-width="1.2"/><rect x="66" y="683" width="18" height="7" fill="#3f9a6a" stroke="#2a7048" stroke-width="1.2"/><rect x="69" y="685" width="12" height="2" fill="#a8d8a0"/><rect x="66" y="679" width="14" height="4" fill="#2f73c0"/><path d="M82 677L86 676L95 697L91 699z" fill="#f0c33a" stroke="#c88a20" stroke-width="1.2"/><path d="M37 734H57M48 725L57 734L48 743" fill="none" stroke="#232629" stroke-width="3.6" stroke-linejoin="miter"/><rect x="66" y="738" width="20" height="8" fill="#d98a48" stroke="#a85a28" stroke-width="1.2"/><rect x="66" y="731" width="18" height="7" fill="#3f9a6a" stroke="#2a7048" stroke-width="1.2"/><rect x="69" y="733" width="12" height="2" fill="#a8d8a0"/><rect x="66" y="727" width="14" height="4" fill="#2f73c0"/><path d="M82 725L86 724L95 745L91 747z" fill="#f0c33a" stroke="#c88a20" stroke-width="1.2"/><path d="M501 185.5H514L521 192.5V210.5H501z" fill="url(#gDoc)" stroke="#9b7b2e" stroke-width="2"/><path d="M514 185.5V192.5H521z" fill="#e8cf8a"/><path d="M513 190.5V202.5Q513 206.5 509 206.5Q506 206.5 505.5 203.5" fill="none" stroke="#3568a4" stroke-width="3.4"/><path d="M711 191.5L727 207.5M727 191.5L711 207.5" stroke="#1e2226" stroke-width="2"/><rect x="1174" y="189" width="18" height="6" fill="none" stroke="#1e1e1e" stroke-width="2"/><rect x="1219" y="189" width="18" height="18" fill="none" stroke="#1e1e1e" stroke-width="2"/><rect x="1218" y="191" width="20" height="2" fill="#1e1e1e"/><rect x="486.5" y="226.5" width="23" height="35" fill="url(#pDot)" stroke="#4aa8e6" stroke-width="1.5"/><circle cx="551" cy="387" r="8.2" fill="#dfe6ee" stroke="#a6b2c0" stroke-width="1.5"/><path d="M546.5 387h9" stroke="#55606e" stroke-width="2"/><circle cx="551" cy="639" r="8.2" fill="#dfe6ee" stroke="#a6b2c0" stroke-width="1.5"/><path d="M546.5 639h9" stroke="#55606e" stroke-width="2"/><path d="M489 643.5L498 633.5L507 643.5z" fill="none" stroke="#6a3dcc" stroke-width="2.4"/><rect x="1212.5" y="234.5" width="15" height="233" rx="7.5" fill="#c9cbce" fill-opacity="0.8" stroke="#9a9a9a" stroke-width="2"/><rect x="560" y="714" width="676" height="32" fill="#eff0f1"/><rect x="570.5" y="722.5" width="453" height="15" rx="7.5" fill="#d1d3d5" stroke="#9b9b9b" stroke-width="2"/><rect x="1273" y="189" width="18" height="6" fill="none" stroke="#1e1e1e" stroke-width="2"/><rect x="1317" y="189" width="18" height="18" fill="none" stroke="#1e1e1e" stroke-width="2"/><rect x="1316" y="191" width="20" height="2" fill="#1e1e1e"/><circle cx="1299" cy="246.5" r="6.5" fill="url(#gSphGrey)"/><circle cx="1312" cy="250" r="6.5" fill="url(#gSphGrey)"/><circle cx="1301" cy="259" r="6.5" fill="#9a9a9a"/><circle cx="1301" cy="258" r="5" fill="#b0b0b0"/><rect x="1337" y="241" width="30" height="20" fill="url(#gCol)" stroke="#8d9bb2" stroke-width="2"/><rect x="1341" y="245" width="30" height="20" fill="url(#gCol)" stroke="#8d9bb2" stroke-width="2"/><rect x="1344" y="254" width="20" height="2.5" fill="#0e3a80"/><circle cx="1304.5" cy="294.5" r="3.8" fill="none" stroke="#111" stroke-width="1.6"/><circle cx="1304.5" cy="304.5" r="3.8" fill="none" stroke="#111" stroke-width="1.6"/><circle cx="1304.5" cy="314.7" r="3.8" fill="none" stroke="#111" stroke-width="1.6"/><rect x="1312" y="344" width="21" height="21" fill="#dcd8b0" stroke="#9a9470" stroke-width="2"/><path d="M1322.5 341V368M1309 354.5H1336" stroke="#6a5a38" stroke-width="2.2"/><text x="1353" y="364" font-family="Liberation Sans" font-size="28" fill="#ffffff">j</text><path d="M1290 391V409M1281 400L1290 409L1299 400" fill="none" stroke="#232629" stroke-width="3.6"/><circle cx="1321" cy="399" r="12.5" fill="#3a9a48" stroke="#1e7a30" stroke-width="2"/><path d="M1327 394A6.5 6.5 0 1 0 1327 404" fill="none" stroke="#ffffff" stroke-width="4"/><path d="M1338 406L1350 411L1338 416z" fill="#3aa048"/><text x="1353" y="412" font-family="Liberation Sans" font-size="28" fill="#232629">S</text><circle cx="1352" cy="452" r="7.5" fill="url(#gSphG)" stroke="#1f6e2c" stroke-width="1.2"/><circle cx="1352" cy="596" r="7.5" fill="url(#gSphG)" stroke="#1f6e2c" stroke-width="1.2"/><circle cx="1352" cy="644" r="7.5" fill="url(#gSphG)" stroke="#1f6e2c" stroke-width="1.2"/><path d="M1345 503L1352 491L1359 503z" transform="translate(0 0)" fill="#fff" stroke="#2f64b0" stroke-width="2.4"/><path d="M1352 496v5M1349.5 498.5h5" transform="translate(0 0)" stroke="#2f64b0" stroke-width="1.6"/><path d="M1345 503L1352 491L1359 503z" transform="translate(0 48)" fill="#fff" stroke="#2f64b0" stroke-width="2.4"/><path d="M1352 496v5M1349.5 498.5h5" transform="translate(0 48)" stroke="#2f64b0" stroke-width="1.6"/><path d="M495 771H516Q520 776 518 784Q516 792 522 799H495z" fill="#dbe8f6" stroke="#7c8aa6" stroke-width="2"/><path d="M495 785H519M512 771V799" stroke="#8a9ab4" stroke-width="1.5"/><circle cx="505" cy="779" r="5" fill="#e02828" stroke="#b01010" stroke-width="1"/><path d="M499 798V791L505 786L511 791V798z" fill="#f6c030" stroke="#d08a10" stroke-width="1"/><text x="679" y="794" font-family="Liberation Serif" font-weight="bold" font-style="italic" font-size="25" fill="#1a5ca6">@</text><path d="M839 771H854L861 778V795H839z" fill="url(#gDoc)" stroke="#a88a40" stroke-width="2"/><path d="M850 777q-3 0 -3 3v2l-2 1.5l2 1.5v2q0 3 3 3" fill="none" stroke="#2d5fa0" stroke-width="1.6"/><path d="M852 781h5M852 785h5" stroke="#2d5fa0" stroke-width="1.5"/><path d="M851 793.5h7v-4.5l8 7.5l-8 7.5v-4.5h-7z" fill="url(#gArrow)" stroke="#c08a1a" stroke-width="1.8" stroke-linejoin="round"/><g opacity="1.0"><rect x="1046" y="773" width="23" height="19" rx="2" fill="#eaf4fb" stroke="#3a68b6" stroke-width="3"/><rect x="1050" y="779" width="8" height="2" fill="#35509a"/><rect x="1050" y="783" width="14" height="2" fill="#35509a"/><rect x="1054" y="792" width="7" height="3" fill="#3a68b6"/><rect x="1047" y="795" width="21" height="3" fill="#3a68b6"/></g><path d="M1199 779L1215 795M1215 779L1199 795" stroke="#1e2226" stroke-width="2"/><rect x="1273" y="777" width="18" height="6" fill="none" stroke="#1e1e1e" stroke-width="2"/><rect x="1317" y="777" width="18" height="18" fill="none" stroke="#1e1e1e" stroke-width="2"/><rect x="1316" y="779" width="20" height="2" fill="#1e1e1e"/><rect x="767" y="831" width="20" height="20" rx="3" fill="#9c9c9c" stroke="#c4c4c4" stroke-width="2.2"/><path d="M811.25 830.75L830.75 850.25M830.75 830.75L811.25 850.25" stroke="#6e6e6e" stroke-width="6.5" stroke-linecap="round"/><path d="M852.5 827.0L869.5 844.0M869.5 827.0L852.5 844.0" stroke="#555" stroke-width="5" stroke-linecap="round"/><path d="M852.5 827.0L869.5 844.0M869.5 827.0L852.5 844.0" stroke="#dcdcdc" stroke-width="3" stroke-linecap="round"/><path d="M860.0 837.0L877.0 854.0M877.0 837.0L860.0 854.0" stroke="#6a6a6a" stroke-width="6" stroke-linecap="round"/><rect x="892" y="818" width="2" height="43" fill="#b0b0b0"/><path d="M909 825.5H923L929 831.5V851.5H909z" fill="url(#gDoc)" stroke="#a89a6a" stroke-width="2"/><rect x="913" y="832.5" width="13" height="2" fill="#4a6ab0"/><rect x="913" y="836.5" width="11" height="2" fill="#4a6ab0"/><rect x="913" y="840.5" width="13" height="2" fill="#4a6ab0"/><rect x="913" y="844.5" width="11" height="2" fill="#4a6ab0"/><rect x="913" y="848.5" width="13" height="2" fill="#4a6ab0"/><path d="M925.1 842.6L935.9 853.4M935.9 842.6L925.1 853.4" stroke="#555" stroke-width="4.2" stroke-linecap="round"/><rect x="955" y="827" width="27" height="27" fill="#eaf3fb" stroke="#8c9fc0" stroke-width="2"/><rect x="971" y="827" width="11" height="27" fill="#e0e8f4" stroke="#8c9fc0" stroke-width="2"/><rect x="974.5" y="831" width="4" height="3" fill="#4a6ab0"/><rect x="974.5" y="847" width="4" height="3" fill="#4a6ab0"/><path d="M955 846v-5a5.5 5.5 0 0 1 11 0v5" fill="none" stroke="#b07a18" stroke-width="2.6"/><rect x="952.5" y="844" width="16" height="11" rx="1.5" fill="#f0c040" stroke="#a8741a" stroke-width="1.6"/><circle cx="960.5" cy="849" r="1.6" fill="#333"/><path d="M997 825.5H1011L1017 831.5V851.5H997z" fill="url(#gDoc)" stroke="#a89a6a" stroke-width="2"/><rect x="1001" y="832.5" width="13" height="2" fill="#4a6ab0"/><rect x="1001" y="836.5" width="11" height="2" fill="#4a6ab0"/><rect x="1001" y="840.5" width="13" height="2" fill="#4a6ab0"/><rect x="1001" y="844.5" width="11" height="2" fill="#4a6ab0"/><rect x="1001" y="848.5" width="13" height="2" fill="#4a6ab0"/><path d="M1022 831V845H1007M1012 839L1005 845L1012 851" fill="none" stroke="#c08a1a" stroke-width="4" stroke-linejoin="round"/><path d="M1022 831V845H1007M1012 839L1005 845L1012 851" fill="none" stroke="#f8e0a0" stroke-width="1.5"/><rect x="1036.5" y="822.5" width="35" height="34" rx="5" fill="#d6d4d1" stroke="#c2c0bd" stroke-width="1.5"/><rect x="1080.5" y="822.5" width="35" height="34" rx="5" fill="#d6d4d1" stroke="#c2c0bd" stroke-width="1.5"/><rect x="1042" y="843" width="14" height="10" fill="#eaf3fb" stroke="#3a6ab6" stroke-width="2"/><rect x="1046" y="853" width="6" height="2" fill="#3a6ab6"/><rect x="1043" y="855" width="12" height="2" fill="#3a6ab6"/><rect x="1050" y="827" width="19" height="15" fill="#eaf3fb" stroke="#3a6ab6" stroke-width="2"/><rect x="1054" y="831" width="10" height="2" fill="#35509a"/><rect x="1054" y="835" width="12" height="2" fill="#35509a"/><rect x="1086" y="843" width="14" height="10" fill="#eaf3fb" stroke="#3a6ab6" stroke-width="2"/><rect x="1090" y="853" width="6" height="2" fill="#3a6ab6"/><rect x="1087" y="855" width="12" height="2" fill="#3a6ab6"/><rect x="1092" y="827" width="20" height="15" fill="#eaf3fb" stroke="#3a6ab6" stroke-width="2"/><path d="M1095 830l8 8M1103 830l-8 8" stroke="#e02020" stroke-width="3"/><rect x="1105" y="832" width="4" height="2" fill="#35509a"/><rect x="1105" y="836" width="4" height="2" fill="#35509a"/><rect x="1126" y="818" width="2" height="43" fill="#b0b0b0"/><rect x="1145" y="835" width="26" height="18" fill="url(#gWin)" stroke="#8d7b52" stroke-width="2"/><rect x="1144" y="834" width="28" height="5" fill="#3b8fd8"/><path d="M1155 846L1163 838" stroke="#222" stroke-width="2"/><g transform="rotate(45 1166 833)"><rect x="1161" y="828" width="10" height="10" rx="2" fill="#3aa03a" stroke="#1f7020" stroke-width="1.5"/><rect x="1159" y="826" width="14" height="4" rx="1.5" fill="#55b848" stroke="#1f7020" stroke-width="1.2"/></g><g opacity="0.45"><rect x="1189" y="827" width="23" height="19" rx="2" fill="#eaf4fb" stroke="#3a68b6" stroke-width="3"/><rect x="1193" y="833" width="8" height="2" fill="#35509a"/><rect x="1193" y="837" width="14" height="2" fill="#35509a"/><rect x="1197" y="846" width="7" height="3" fill="#3a68b6"/><rect x="1190" y="849" width="21" height="3" fill="#3a68b6"/></g><path d="M1234 836h20l-10.0 10z" fill="#232629"/><rect x="1275" y="834" width="26" height="19" fill="url(#gWin)" stroke="#8d7b52" stroke-width="2"/><rect x="1274" y="833" width="28" height="5" fill="#3b8fd8"/><path d="M1281 852Q1296 850 1297 836" fill="none" stroke="#f5dc8a" stroke-width="2.5" opacity="0.8"/><path d="M1296 826.5L1303.5 834L1296 841.5L1288.5 834z" fill="#b8921f" stroke="#a47e12" stroke-width="1.5"/><path d="M1292 834h8M1296 830v8" stroke="#b08a1e" stroke-width="0" /><path d="M1292 834h8M1296 830v8" stroke="#fff8e0" stroke-width="2.4"/><path d="M1322 836h20l-10.0 10z" fill="#232629"/><text x="490" y="934" clip-path="url(#cpCon)" font-family="Liberation Mono" font-size="29" fill="#ff0000" style="letter-spacing:-1.4px;white-space:pre">Cannot erase "undefined"</text><rect x="797" y="932" width="4" height="4" fill="url(#gGrip)"/><rect x="797" y="940" width="4" height="4" fill="url(#gGrip)"/><rect x="797" y="948" width="4" height="4" fill="url(#gGrip)"/><rect x="797" y="956" width="4" height="4" fill="url(#gGrip)"/><rect x="1297" y="932" width="4" height="4" fill="url(#gGrip)"/><rect x="1297" y="940" width="4" height="4" fill="url(#gGrip)"/><rect x="1297" y="948" width="4" height="4" fill="url(#gGrip)"/><rect x="1297" y="956" width="4" height="4" fill="url(#gGrip)"/><path d="M1335 932a8.5 8.5 0 0 1 5 15.5q-2 2 -2 5h-6q0 -3 -2 -5a8.5 8.5 0 0 1 5 -15.5z" fill="#fff7c0" stroke="#f2b21c" stroke-width="2"/><rect x="1331" y="953" width="8" height="7" rx="1" fill="#6a7aa0"/></svg>
<div class="b" style="left:1360px;top:168px;width:2px;height:580px;background:#cfcac4"></div><div class="b" style="left:1360px;top:756px;width:2px;height:164px;background:#cfcac4"></div>
</body></html>
